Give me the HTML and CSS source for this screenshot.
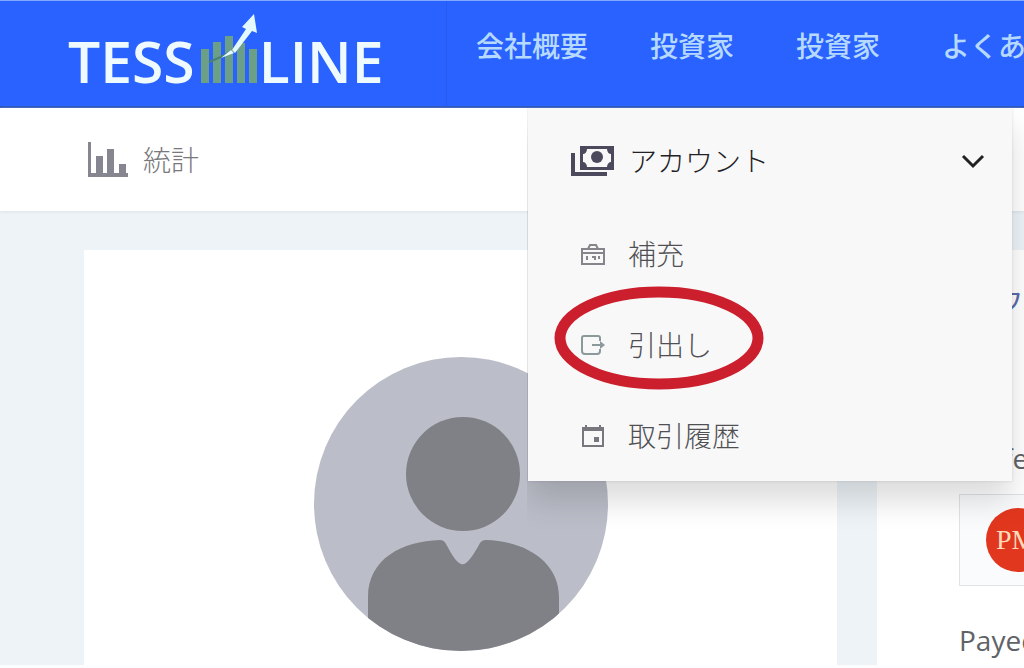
FILE: index.html
```html
<!DOCTYPE html>
<html lang="ja">
<head>
    <meta charset="UTF-8">
    <meta name="viewport" content="width=device-width, initial-scale=1.0">
    <title>TESSLINE</title>
    <link rel="stylesheet" href="styles.css">
</head>
<body>
    <header class="header">
        <a href="#" class="logo">
            <span>TESS</span>
            <svg class="logo-chart" width="64" height="76" viewBox="0 0 64 76">
                <g fill="#6b9f88">
                    <rect x="6" y="39" width="8" height="34"/>
                    <rect x="18" y="32" width="8" height="41"/>
                    <rect x="30" y="26" width="8" height="47"/>
                    <rect x="42" y="33" width="8" height="40"/>
                    <rect x="54" y="39" width="8" height="34"/>
                </g>
                <path d="M14 52 L28 46 L38 40 L54 18" fill="none" stroke="#4c8075" stroke-width="2"/>
                <path d="M26 48 L36 40 L39 43 Z M37 40 L51 19 L47 17 L59 4 L62 23 L57 21 L40 43 Z" fill="#e4f8ff"/>
            </svg>
            <span>LINE</span>
        </a>
        <nav class="menu">
            <a href="#">会社概要</a>
            <a href="#">投資家</a>
            <a href="#">投資家</a>
            <a href="#">よくある質問</a>
        </nav>
    </header>

    <nav class="subnav">
        <a href="#" class="stats">
            <svg width="40" height="36" viewBox="0 0 40 36" fill="#85868f">
                <path d="M0 0h3v31h37v4H0z"/>
                <rect x="8" y="14" width="7" height="17"/>
                <rect x="19" y="7" width="7" height="24"/>
                <rect x="31" y="22" width="7" height="9"/>
            </svg>
            <span>統計</span>
        </a>
        <div class="account">
            <div class="dropdown">
                <button class="dropdown-head" type="button">
                    <svg width="44" height="32" viewBox="0 0 44 32">
                        <path d="M2 8v21h34" fill="none" stroke="#4a4a5c" stroke-width="4"/>
                        <path fill="#4a4a5c" fill-rule="evenodd" d="M9 1h34v24H9z M16 4c0 3-2 5-4 5v8c2 0 4 2 4 5h20c0-3 2-5 4-5V9c-2 0-4-2-4-5z"/>
                        <circle cx="26" cy="12" r="6" fill="#4a4a5c"/>
                    </svg>
                    <span>アカウント</span>
                    <svg class="chevron" width="24" height="16" viewBox="0 0 24 16">
                        <path d="M2 3l10 10L22 3" fill="none" stroke="#222" stroke-width="3"/>
                    </svg>
                </button>
                <a href="#" class="dropdown-item">
                    <svg width="24" height="24" viewBox="0 0 24 24" fill="none" stroke="#85858c" stroke-width="2">
                        <path d="M1 7h22v15H1z M7 7l2-4h6l2 4 M1 11h22"/>
                        <path d="M6 14v4 M11 15h3v3 M18 14v3"/>
                    </svg>
                    <span>補充</span>
                </a>
                <a href="#" class="dropdown-item">
                    <svg width="24" height="24" viewBox="0 0 24 24" fill="none" stroke="#8b999b" stroke-width="2">
                        <path d="M19 8V5q0-2-2-2H3Q1 3 1 5v13q0 3 3 3h12q3 0 3-3v-2"/>
                        <path d="M11 12h10"/>
                        <path d="M19 8l5 4-5 4z" fill="#8b999b" stroke="none"/>
                    </svg>
                    <span>引出し</span>
                    <svg class="mark" width="212" height="104" viewBox="0 0 212 104">
                        <ellipse cx="106" cy="52" rx="99" ry="46" fill="none" stroke="#cc1f2d" stroke-width="11"/>
                    </svg>
                </a>
                <a href="#" class="dropdown-item">
                    <svg width="24" height="24" viewBox="0 0 24 24">
                        <path d="M2 4h20v18H2z M5 1v4 M19 1v4" fill="none" stroke="#77777e" stroke-width="2"/>
                        <path d="M2 3h20v4H2z M13 13h5v5h-5z" fill="#77777e"/>
                    </svg>
                    <span>取引履歴</span>
                </a>
            </div>
        </div>
    </nav>

    <main class="content">
        <section class="card profile">
            <svg class="avatar" width="294" height="294" viewBox="0 0 294 294">
                <defs>
                    <clipPath id="round"><circle cx="147" cy="147" r="147"/></clipPath>
                </defs>
                <g clip-path="url(#round)">
                    <rect width="294" height="294" fill="#bbbec8"/>
                    <circle cx="149" cy="117" r="57" fill="#808186"/>
                    <path d="M54 294V240C54 202 88 184 126 183Q130 183 132 187C137 196 141 204 147 207Q149 208 152 206C158 201 162 193 166 186Q168 183 172 183C212 184 245 205 245 240V294Z" fill="#808186"/>
                </g>
            </svg>
        </section>
        <section class="card wallets">
            <h2>ウ</h2>
            <div class="wallet-name">Perfect Money</div>
            <div class="wallet-box"><span class="pm">PM</span></div>
            <div class="wallet-name">Payeer</div>
        </section>
    </main>
</body>
</html>
```
FILE: styles.css
```css
* {
    box-sizing: border-box;
}

body {
    display: flex;
    flex-direction: column;
    height: 100vh;
    margin: 0;
    overflow: hidden;
    background-color: #edf3f7;
    border-bottom: 3px solid #fcfdfe;
    font-family: "Open Sans", "Noto Sans CJK JP", sans-serif;
    font-size: 28px;
    line-height: 40px;
    color: #5f6368;
}

a {
    color: inherit;
    text-decoration: none;
}

svg {
    flex-shrink: 0;
}

.header {
    display: flex;
    flex-shrink: 0;
    height: 108px;
    background-color: #2962ff;
    border-top: 1px solid #84a8ff;
    border-bottom: 2px solid #2850b8;
}

.logo {
    display: flex;
    align-items: flex-end;
    flex-shrink: 0;
    width: 447px;
    padding: 0 0 20px 68px;
    border-right: 1px solid #265af0;
    color: #effaff;
    font-size: 57px;
    font-weight: 600;
    line-height: 50px;
}

.menu {
    display: flex;
    gap: 62px;
    padding: 25px 0 0 29px;
    overflow: hidden;
    white-space: nowrap;
    color: #b5d9ff;
    font-weight: 500;
}

.menu a {
    flex-shrink: 0;
}

.subnav {
    display: flex;
    flex-shrink: 0;
    height: 103px;
    background-color: #fff;
    box-shadow: 0 1px 3px #dce3ea;
}

.stats {
    display: flex;
    align-items: center;
    gap: 15px;
    width: 528px;
    padding-left: 88px;
    color: #78787d;
    font-weight: 300;
}

.account {
    position: relative;
    flex: 1;
    margin-right: 12px;
}

.dropdown {
    position: absolute;
    top: 0;
    left: 0;
    right: 0;
    z-index: 2;
    background-color: #f8f8f9;
    box-shadow: 0 20px 30px rgba(0, 0, 0, 0.14), 0 0 3px rgba(0, 0, 0, 0.12);
    clip-path: inset(0 -60px -80px -1px);
}

.dropdown-head {
    display: flex;
    align-items: center;
    gap: 14px;
    width: 100%;
    height: 100px;
    padding: 6px 27px 0 43px;
    border: none;
    background: none;
    color: #222226;
    font: inherit;
    font-weight: 300;
    cursor: pointer;
}

.chevron {
    margin-left: auto;
}

.dropdown-item {
    position: relative;
    display: flex;
    align-items: center;
    gap: 23px;
    height: 91px;
    padding-left: 53px;
    color: #505054;
    font-weight: 300;
}

/* red ring around the withdraw entry */
.mark {
    position: absolute;
    top: -13px;
    left: 25px;
}

.content {
    display: grid;
    grid-template-columns: 1fr 147px;
    gap: 40px;
    flex: 1;
    min-height: 0;
    padding: 39px 0 0 84px;
}

.card {
    overflow: hidden;
    background-color: #fff;
}

.profile {
    padding-top: 107px;
    text-align: center;
}

.wallets {
    padding: 30px 0 0 82px;
    white-space: nowrap;
}

.wallets h2 {
    margin: 0 0 118px;
    padding-left: 36px;
    color: #5a6ba8;
    font-size: 28px;
    font-weight: 400;
}

.wallet-name {
    font-size: 28px;
}

.wallet-box {
    width: 160px;
    height: 92px;
    margin: 16px 0 34px;
    padding: 13px 26px;
    border: 1px solid #e0e3e6;
    background-color: #fafbfc;
}

.pm {
    display: block;
    width: 64px;
    height: 64px;
    padding-left: 10px;
    border-radius: 50%;
    background-color: #e2371f;
    color: #ffd9b8;
    font-family: "Liberation Serif", serif;
    font-size: 28px;
    line-height: 64px;
}
```
